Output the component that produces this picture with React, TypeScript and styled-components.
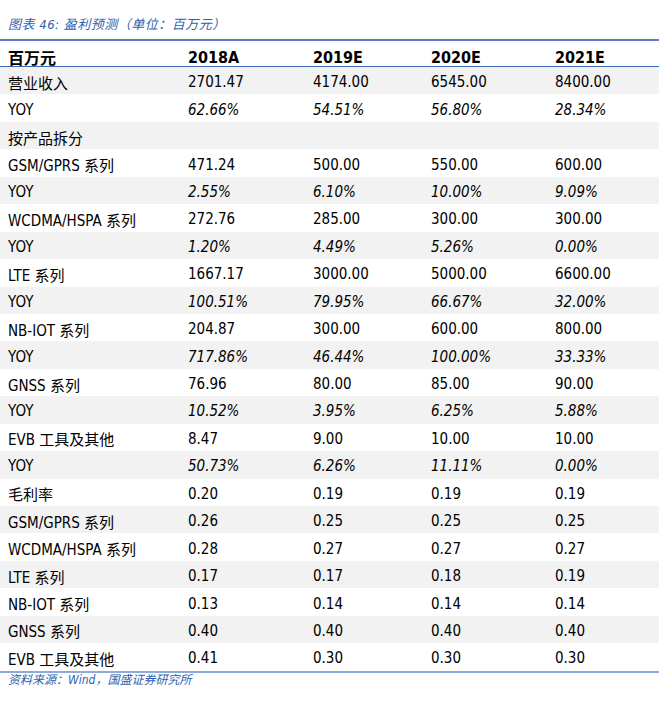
import styled, { createGlobalStyle } from 'styled-components';

const GlobalStyle = createGlobalStyle`
  html, body {
    margin: 0;
    padding: 0;
    background: #ffffff;
  }
  body {
    font-family: 'DejaVu Sans Condensed', 'Noto Sans CJK SC', sans-serif;
    color: #000;
  }
`;

const Page = styled.div`
  width: 659px;
  padding-top: 14px;
`;

const Caption = styled.div`
  padding: 0 0 4px 8px;
  height: 21px;
  font-size: 13px;
  font-style: italic;
  color: #2e5fae;
  line-height: 21px;
  letter-spacing: 0.5px;
`;

const Table = styled.div`
  border-top: 2px solid #5b80c0;
  border-bottom: 2px solid #8eaadb;
`;

const Row = styled.div<{ $shade?: boolean; $head?: boolean }>`
  display: grid;
  grid-template-columns: 180px 125px 118px 124px 112px;
  height: ${({ $head }) => ($head ? '26px' : '27.45px')};
  padding-top: ${({ $head }) => ($head ? '1px' : '0')};
  box-sizing: border-box;
  align-items: center;
  background: ${({ $shade }) => ($shade ? '#f2f2f2' : '#ffffff')};
  border-bottom: ${({ $head }) => ($head ? '1.5px solid #3b6cb7' : 'none')};
  font-size: 15px;
`;

const Cell = styled.div<{ $italic?: boolean; $bold?: boolean }>`
  padding: 3px 0 0 8px;
  white-space: nowrap;
  font-style: ${({ $italic }) => ($italic ? 'italic' : 'normal')};
  font-weight: ${({ $bold }) => ($bold ? 700 : 400)};
  font-size: ${({ $bold }) => ($bold ? '16px' : '15px')};
`;

const Source = styled.div`
  padding: 0 0 0 8px;
  font-size: 12px;
  font-style: italic;
  color: #2e5fae;
  line-height: 14px;
`;

type Line = [string, string[], boolean?];

const rows: Line[] = [
  ['营业收入', ['2701.47', '4174.00', '6545.00', '8400.00']],
  ['YOY', ['62.66%', '54.51%', '56.80%', '28.34%'], true],
  ['按产品拆分', ['', '', '', '']],
  ['GSM/GPRS 系列', ['471.24', '500.00', '550.00', '600.00']],
  ['YOY', ['2.55%', '6.10%', '10.00%', '9.09%'], true],
  ['WCDMA/HSPA 系列', ['272.76', '285.00', '300.00', '300.00']],
  ['YOY', ['1.20%', '4.49%', '5.26%', '0.00%'], true],
  ['LTE 系列', ['1667.17', '3000.00', '5000.00', '6600.00']],
  ['YOY', ['100.51%', '79.95%', '66.67%', '32.00%'], true],
  ['NB-IOT 系列', ['204.87', '300.00', '600.00', '800.00']],
  ['YOY', ['717.86%', '46.44%', '100.00%', '33.33%'], true],
  ['GNSS 系列', ['76.96', '80.00', '85.00', '90.00']],
  ['YOY', ['10.52%', '3.95%', '6.25%', '5.88%'], true],
  ['EVB 工具及其他', ['8.47', '9.00', '10.00', '10.00']],
  ['YOY', ['50.73%', '6.26%', '11.11%', '0.00%'], true],
  ['毛利率', ['0.20', '0.19', '0.19', '0.19']],
  ['GSM/GPRS 系列', ['0.26', '0.25', '0.25', '0.25']],
  ['WCDMA/HSPA 系列', ['0.28', '0.27', '0.27', '0.27']],
  ['LTE 系列', ['0.17', '0.17', '0.18', '0.19']],
  ['NB-IOT 系列', ['0.13', '0.14', '0.14', '0.14']],
  ['GNSS 系列', ['0.40', '0.40', '0.40', '0.40']],
  ['EVB 工具及其他', ['0.41', '0.30', '0.30', '0.30']],
];

const years = ['2018A', '2019E', '2020E', '2021E'];

export default function App() {
  return (
    <Page>
      <GlobalStyle />
      <Caption>图表 46: 盈利预测（单位：百万元）</Caption>
      <Table>
        <Row $head>
          <Cell $bold>百万元</Cell>
          {years.map((y) => (
            <Cell key={y} $bold>
              {y}
            </Cell>
          ))}
        </Row>
        {rows.map(([label, vals, pct], i) => (
          <Row key={i} $shade={i % 2 === 0}>
            <Cell>{label}</Cell>
            {vals.map((v, j) => (
              <Cell key={j} $italic={pct}>
                {v}
              </Cell>
            ))}
          </Row>
        ))}
      </Table>
      <Source>资料来源：Wind，国盛证券研究所</Source>
    </Page>
  );
}
